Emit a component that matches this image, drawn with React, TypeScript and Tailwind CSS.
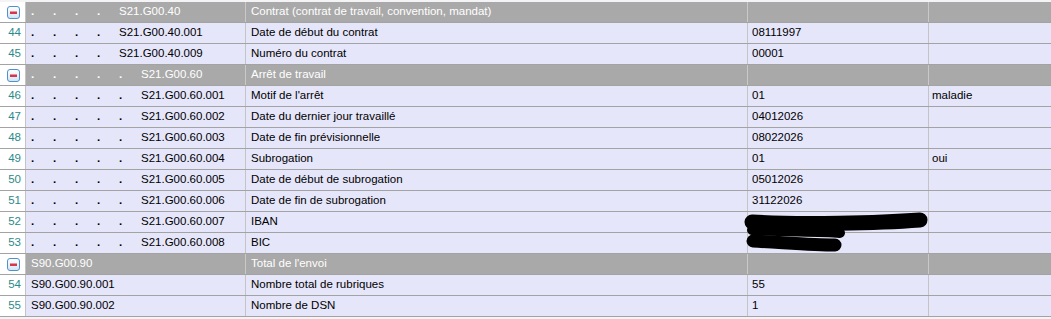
type Row =
  | { kind: 'group'; level: number; code: string; label: string }
  | { kind: 'item'; n: number; level: number; code: string; label: string; value?: string; extra?: string };

const rows: Row[] = [
  { kind: 'group', level: 4, code: 'S21.G00.40', label: 'Contrat (contrat de travail, convention, mandat)' },
  { kind: 'item', n: 44, level: 4, code: 'S21.G00.40.001', label: 'Date de début du contrat', value: '08111997' },
  { kind: 'item', n: 45, level: 4, code: 'S21.G00.40.009', label: 'Numéro du contrat', value: '00001' },
  { kind: 'group', level: 5, code: 'S21.G00.60', label: 'Arrêt de travail' },
  { kind: 'item', n: 46, level: 5, code: 'S21.G00.60.001', label: "Motif de l'arrêt", value: '01', extra: 'maladie' },
  { kind: 'item', n: 47, level: 5, code: 'S21.G00.60.002', label: 'Date du dernier jour travaillé', value: '04012026' },
  { kind: 'item', n: 48, level: 5, code: 'S21.G00.60.003', label: 'Date de fin prévisionnelle', value: '08022026' },
  { kind: 'item', n: 49, level: 5, code: 'S21.G00.60.004', label: 'Subrogation', value: '01', extra: 'oui' },
  { kind: 'item', n: 50, level: 5, code: 'S21.G00.60.005', label: 'Date de début de subrogation', value: '05012026' },
  { kind: 'item', n: 51, level: 5, code: 'S21.G00.60.006', label: 'Date de fin de subrogation', value: '31122026' },
  { kind: 'item', n: 52, level: 5, code: 'S21.G00.60.007', label: 'IBAN' },
  { kind: 'item', n: 53, level: 5, code: 'S21.G00.60.008', label: 'BIC' },
  { kind: 'group', level: 0, code: 'S90.G00.90', label: "Total de l'envoi" },
  { kind: 'item', n: 54, level: 0, code: 'S90.G00.90.001', label: 'Nombre total de rubriques', value: '55' },
  { kind: 'item', n: 55, level: 0, code: 'S90.G00.90.002', label: 'Nombre de DSN', value: '1' },
];

const MinusBox = () => (
  <svg width="13" height="13" viewBox="0 0 13 13">
    <defs>
      <linearGradient id="mb" x1="0" y1="0" x2="0" y2="1">
        <stop offset="0" stopColor="#ffffff" />
        <stop offset="1" stopColor="#cfe4f5" />
      </linearGradient>
    </defs>
    <rect x="0.5" y="0.5" width="12" height="12" rx="2.5" fill="url(#mb)" stroke="#4f91c9" />
    <rect x="3" y="5.5" width="7" height="2.5" fill="#d9344a" />
  </svg>
);

// one dot per indent level, 22px apart
const Dots = ({ level }: { level: number }) => (
  <>
    {Array.from({ length: level }).map((_, i) => (
      <span key={i} className="inline-block w-[22px] shrink-0 font-bold">.</span>
    ))}
  </>
);

const GridRow = ({ row }: { row: Row }) => {
  const group = row.kind === 'group';
  const cell = group ? 'bg-[#a9a9a9] text-white border-[#c9c9c9]' : 'bg-[#e6e6fa] text-black border-[#c4c4c4]';

  return (
    <div className="flex h-[21px] border-b border-[#a3a3a3]">
      <div className="w-[26px] shrink-0 bg-white border-r border-[#c4c4c4] flex items-center justify-end pr-[4px] text-[#2b8a8a]">
        {group ? (
          <span className="mr-[1px] flex">
            <MinusBox />
          </span>
        ) : (
          row.n
        )}
      </div>
      <div className={`w-[220px] shrink-0 border-r flex items-center pl-[5px] ${cell}`}>
        <Dots level={row.level} />
        <span>{row.code}</span>
      </div>
      <div className={`w-[502px] shrink-0 border-r flex items-center pl-[5px] ${cell}`}>{row.label}</div>
      <div className={`w-[181px] shrink-0 border-r flex items-center pl-[4px] ${cell}`}>
        {row.kind === 'item' ? row.value : ''}
      </div>
      <div className={`flex-1 flex items-center pl-[3px] ${cell}`}>{row.kind === 'item' ? row.extra : ''}</div>
    </div>
  );
};

export default function App() {
  return (
    <div
      className="relative w-[1051px] h-[319px] bg-[#f4f4f6] pt-[2px] text-[11.5px] leading-none overflow-hidden"
      style={{ fontFamily: '"Liberation Sans", Arial, sans-serif' }}
    >
      {rows.map((row) => (
        <GridRow key={row.code} row={row} />
      ))}
      {/* redaction scribble over IBAN / BIC */}
      <svg className="absolute left-0 top-0 pointer-events-none" width="1051" height="319">
        <path d="M752 222 C800 225 880 223 920 220" stroke="#000" strokeWidth="15" strokeLinecap="round" fill="none" />
        <path d="M752 230 C780 232 820 231 840 233" stroke="#000" strokeWidth="10" strokeLinecap="round" fill="none" />
        <path d="M753 241 C790 243 815 245 835 245" stroke="#000" strokeWidth="13" strokeLinecap="round" fill="none" />
      </svg>
    </div>
  );
}
